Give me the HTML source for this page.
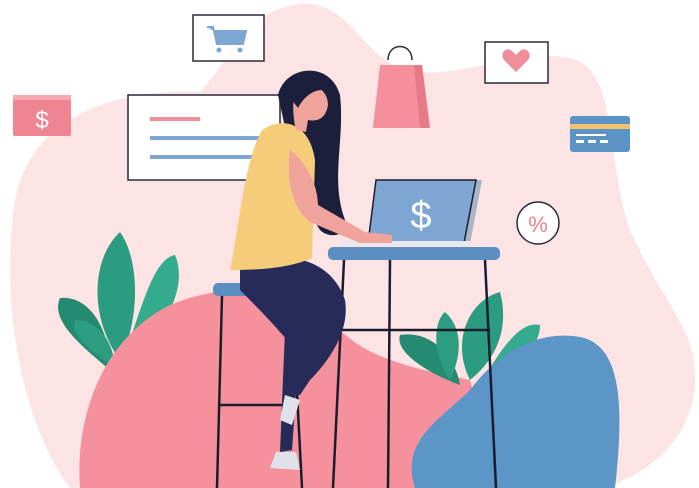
<!DOCTYPE html>
<html><head><meta charset="utf-8"><style>html,body{margin:0;padding:0;background:#fff;overflow:hidden}svg{display:block}</style></head>
<body>
<svg width="699" height="488" viewBox="0 0 699 488" xmlns="http://www.w3.org/2000/svg" font-family="Liberation Sans, sans-serif">
<!-- light blob -->
<path d="M70,488 C20,420 0,300 15,200 C30,120 110,88 200,92 C230,60 250,8 300,4 C350,0 360,55 405,70 C450,82 520,48 570,58 C620,70 605,160 630,230 C660,300 699,330 695,385 C690,440 650,475 600,488 Z" fill="#fce4e4"/>
<!-- board -->
<rect x="128" y="95" width="152" height="85" fill="#fff" stroke="#2a2a3a" stroke-width="1.5"/>
<rect x="150" y="117" width="50" height="4" fill="#f08e99"/>
<rect x="150" y="136" width="110" height="4" fill="#7ea6d2"/>
<rect x="150" y="155" width="110" height="4" fill="#7ea6d2"/>
<!-- cart frame -->
<rect x="193" y="15" width="71" height="46" fill="#fff" stroke="#2a2a3a" stroke-width="1.5"/>
<path d="M207,27 L213,27 L217,44 L243,44 L246,31 L214,31" fill="#7ea6d2" stroke="#7ea6d2" stroke-width="2"/>
<circle cx="219" cy="50" r="2.5" fill="#7ea6d2"/><circle cx="240" cy="50" r="2.5" fill="#7ea6d2"/>
<!-- bag -->
<path d="M388,60 C388,42 412,42 412,60" fill="none" stroke="#2a2a3a" stroke-width="1.5"/>
<path d="M380,65 L422,65 L430,128 L373,128 Z" fill="#f48f9c"/>
<path d="M414,65 L422,65 L430,128 L420,128 Z" fill="#e77a88"/>
<!-- heart frame -->
<rect x="485" y="42" width="63" height="41" fill="#fff" stroke="#2a2a3a" stroke-width="1.5"/>
<path d="M516,72 L504,60 C499,54 506,46 512,51 L516,55 L520,51 C526,46 533,54 528,60 Z" fill="#f08e99"/>
<!-- credit card -->
<rect x="570" y="116" width="60" height="36" rx="3" fill="#5b93c7"/>
<rect x="570" y="124" width="60" height="5" fill="#f3c36b"/>
<rect x="576" y="134" width="30" height="2" fill="#fff"/>
<rect x="576" y="140" width="8" height="3" fill="#fff"/><rect x="588" y="140" width="8" height="3" fill="#fff"/><rect x="600" y="140" width="8" height="3" fill="#fff"/>
<!-- dollar card -->
<rect x="13" y="95" width="58" height="41" rx="2" fill="#ef8593"/>
<rect x="13" y="95" width="58" height="5" fill="#f7a9b2"/>
<text x="42" y="128" font-size="24" fill="#fff" text-anchor="middle">$</text>
<!-- percent -->
<circle cx="538" cy="223" r="21" fill="#fff" stroke="#2a2a3a" stroke-width="1.5"/>
<text x="538" y="232" font-size="22" fill="#ef7f8e" text-anchor="middle">%</text>
<!-- left plant -->
<g fill="#2c9c80">
<path d="M120,360 C90,320 90,260 120,232 C140,260 140,320 120,360 Z"/>
<path d="M120,365 C140,320 150,260 175,255 C190,290 160,340 120,365 Z" fill="#34ab8c"/>
<path d="M110,370 C80,345 50,320 60,298 C90,295 110,330 110,370 Z" fill="#248a71"/>
<path d="M115,370 C95,350 70,340 75,320 C100,320 115,345 115,370 Z" fill="#2d9d81"/>
</g>
<!-- pink blob -->
<path d="M80,488 C75,420 100,340 170,305 C230,280 300,285 340,330 C370,360 420,370 470,380 L500,488 Z" fill="#f4919c"/>
<!-- right plant -->
<g>
<path d="M470,380 C450,340 470,300 500,292 C510,330 495,360 470,380 Z" fill="#2c9c80"/>
<path d="M460,385 C420,370 395,350 400,335 C430,330 455,355 460,385 Z" fill="#248a71"/>
<path d="M480,385 C500,350 520,320 540,325 C540,350 510,375 480,385 Z" fill="#34ab8c"/>
<path d="M450,380 C430,350 435,320 445,312 C465,330 460,360 450,380 Z" fill="#2d9d81"/>
</g>
<!-- blue blob -->
<path d="M415,488 C400,440 440,420 470,390 C500,350 540,330 580,337 C620,345 625,400 615,488 Z" fill="#5b96c6"/>
<!-- stool -->
<g stroke="#1b1d2e" stroke-width="2.5" fill="none">
<line x1="222" y1="296" x2="217" y2="488"/><line x1="292" y1="296" x2="302" y2="488"/>
<line x1="220" y1="405" x2="298" y2="405"/>
<!-- table legs -->
<line x1="344" y1="260" x2="333" y2="488"/><line x1="390" y1="260" x2="388" y2="488"/><line x1="485" y1="260" x2="496" y2="488"/>
<line x1="340" y1="330" x2="490" y2="330"/>
</g>
<rect x="213" y="283" width="87" height="13" rx="5" fill="#5b8fc4"/>
<!-- laptop -->
<path d="M380,180 L482,180 L470,244 L372,244 Z" fill="#a9b4c4"/>
<path d="M376,180 L476,180 L464,243 L368,243 Z" fill="#7ea6d2" stroke="#1b1d2e" stroke-width="1.5"/>
<text x="421" y="228" font-size="38" fill="#fff" text-anchor="middle">$</text>
<rect x="340" y="241" width="130" height="5" fill="#e8e8ee"/>
<!-- table top -->
<rect x="328" y="247" width="172" height="13" rx="5" fill="#5b8fc4"/>
<!-- woman hair -->
<path d="M278,95 C285,65 330,60 340,95 C345,140 330,180 345,220 C350,235 330,240 320,230 C300,200 290,150 278,95 Z" fill="#1b1f3b"/>
<!-- legs -->
<path d="M240,265 C280,250 330,255 345,300 C350,330 330,360 310,380 L300,395 L285,392 L295,350 C280,330 250,300 240,290 Z" fill="#262b5a"/>
<path d="M285,330 L300,335 L292,450 L280,452 Z" fill="#262b5a"/>
<path d="M285,395 L300,400 L292,425 L280,420 Z" fill="#dfe2ea"/>
<path d="M276,452 L296,452 L300,470 L270,468 Z" fill="#dfe2ea"/>
<!-- shirt -->
<path d="M262,130 C285,115 310,125 315,160 L312,258 C290,268 260,270 230,270 C240,220 245,160 262,130 Z" fill="#f5cd7a"/>
<!-- arm -->
<path d="M290,150 C310,165 318,190 318,205 L365,232 L392,235 L392,243 L360,243 L310,222 C295,210 285,185 290,150 Z" fill="#f0a39a"/>
<!-- head -->
<path d="M298,88 C310,80 328,88 328,105 C326,118 318,122 308,120 L306,132 L296,130 C292,115 292,95 298,88 Z" fill="#f0a39a"/>
<path d="M284,90 C290,75 320,72 330,90 C315,88 305,95 298,108 Z" fill="#1b1f3b"/>
</svg>
</body></html>
